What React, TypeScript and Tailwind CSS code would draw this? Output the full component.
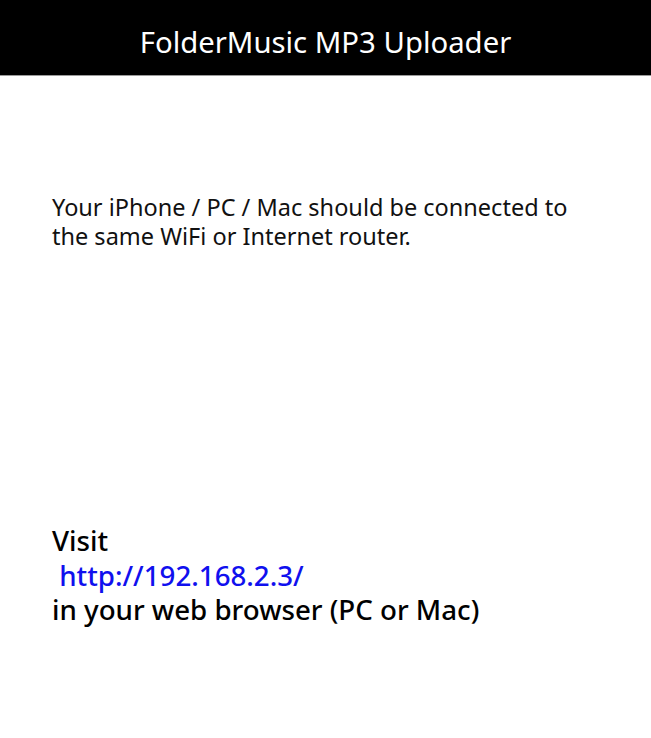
export default function App() {
  return (
    <div className="w-[651px] h-[738px] bg-white flex flex-col" style={{ fontFamily: '"Noto Sans", "Open Sans", sans-serif' }}>
      <div className="h-[76px] shrink-0 bg-black flex items-center justify-center pt-[10px] border-b border-[#9a9a9a]">
        <h1 className="text-white text-[29.3px] font-normal leading-none">FolderMusic MP3 Uploader</h1>
      </div>
      <div className="px-[52px] pt-[117px]">
        <p className="text-[23.5px] leading-[29px] text-[#111]">
          Your iPhone / PC / Mac should be connected to<br />the same WiFi or Internet router.
        </p>
      </div>
      <div className="px-[52px] pt-[272px]">
        <p className="text-[27.7px] leading-[34.5px] font-medium text-black">
          Visit<br />
          <span className="text-[#1010ee]">&nbsp;http://192.168.2.3/</span><br />
          in your web browser (PC or Mac)
        </p>
      </div>
    </div>
  );
}
